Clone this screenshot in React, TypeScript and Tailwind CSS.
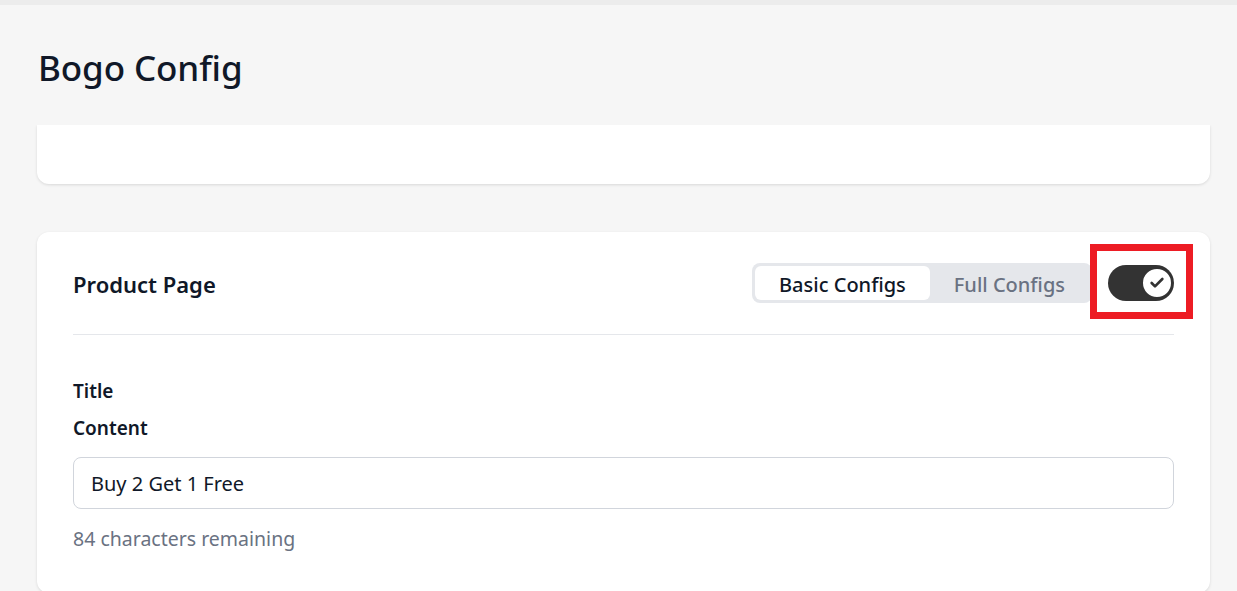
import { Check } from 'lucide-react';

export default function App() {
  return (
    <div className="h-screen overflow-hidden bg-[#f6f6f6] font-['Noto_Sans',sans-serif] text-gray-900 flex flex-col">
      <div className="h-[5px] bg-[#ececec] shrink-0" />

      {/* Page header */}
      <div className="h-[120px] shrink-0 pl-[38px] flex items-center pt-[6px]">
        <h1 className="text-[35px] font-medium tracking-[-0.1px]">Bogo Config</h1>
      </div>

      <div className="flex-1 overflow-hidden pl-[37px] pr-[27px]">
        {/* Previous card, scrolled out of view */}
        <div className="h-[59px] bg-white rounded-b-xl shadow-[0_1px_3px_rgba(0,0,0,0.12)]" />

        {/* Product page card */}
        <div className="mt-12 bg-white rounded-xl shadow-[0_1px_3px_rgba(0,0,0,0.12)] px-[36px] pb-10">
          <div className="flex items-center justify-between py-[31px] border-b border-gray-200">
            <h2 className="text-[22px] font-semibold pt-[3px]">Product Page</h2>
            <div className="flex items-center">
              <div className="flex bg-gray-200 rounded-lg p-[3px]">
                <button className="bg-white rounded-md px-[24px] h-[34px] pt-[3px] text-[20px] font-medium text-gray-900">
                  Basic Configs
                </button>
                <button className="px-[24px] h-[34px] pt-[3px] text-[20px] font-medium text-gray-500">
                  Full Configs
                </button>
              </div>
              <div className="relative ml-[16px]">
                <span className="absolute left-[-18px] right-[-19px] top-[-21px] bottom-[-18px] border-[7px] border-[#ed1c24] pointer-events-none" />
                <button className="w-[66px] h-[36px] rounded-full bg-[#333333] flex items-center justify-end pr-[1px]">
                  <span className="w-[32px] h-[32px] rounded-full bg-white border-2 border-[#333333] flex items-center justify-center">
                    <Check className="w-[16px] h-[16px] text-[#333333]" strokeWidth={4} />
                  </span>
                </button>
              </div>
            </div>
          </div>

          <div className="pt-[42px]">
            <div className="text-[19px] font-semibold leading-[28px]">Title</div>
            <div className="text-[19px] font-semibold leading-[28px] mt-[9px]">Content</div>
            <input
              type="text"
              defaultValue="Buy 2 Get 1 Free"
              className="mt-[15px] w-full h-[52px] rounded-lg border border-gray-300 px-[17px] text-[20px] text-gray-900 outline-none"
            />
            <div className="mt-[16px] text-[19.5px] leading-[28px] text-gray-500">84 characters remaining</div>
          </div>
        </div>
      </div>
    </div>
  );
}
